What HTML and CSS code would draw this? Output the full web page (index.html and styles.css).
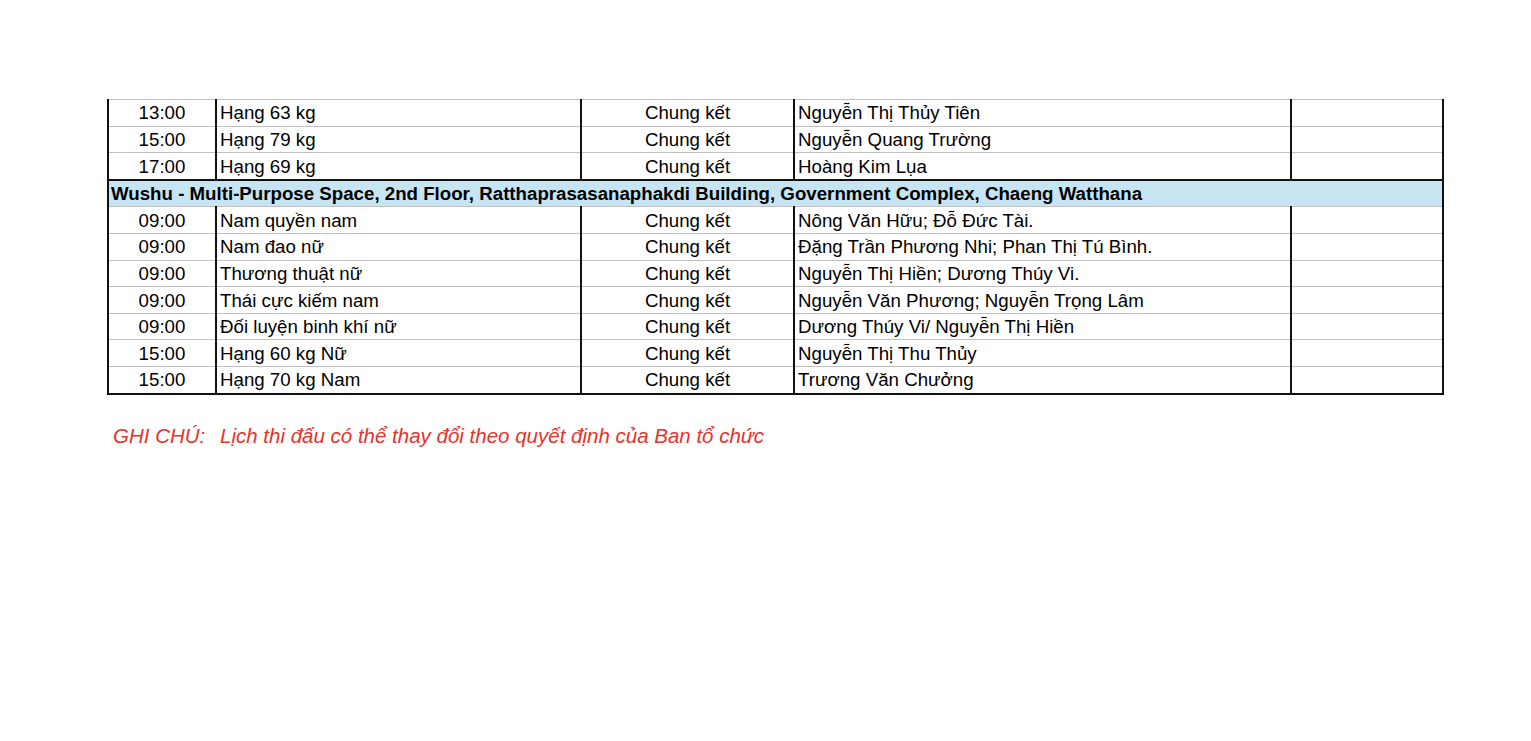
FILE: index.html
```html
<!DOCTYPE html>
<html lang="vi">
<head>
<meta charset="utf-8">
<title>Lịch thi đấu</title>
<link rel="stylesheet" href="styles.css">
</head>
<body>
<div class="page">
  <table class="schedule">
    <colgroup>
      <col class="c-time"><col class="c-event"><col class="c-round"><col class="c-athlete"><col class="c-note">
    </colgroup>
    <tbody>
      <tr class="first"><td class="time">13:00</td><td>Hạng 63 kg</td><td class="round">Chung kết</td><td>Nguyễn Thị Thủy Tiên</td><td></td></tr>
      <tr><td class="time">15:00</td><td>Hạng 79 kg</td><td class="round">Chung kết</td><td>Nguyễn Quang Trường</td><td></td></tr>
      <tr><td class="time">17:00</td><td>Hạng 69 kg</td><td class="round">Chung kết</td><td>Hoàng Kim Lụa</td><td></td></tr>
      <tr class="venue"><td colspan="5">Wushu - Multi-Purpose Space, 2nd Floor, Ratthaprasasanaphakdi Building, Government Complex, Chaeng Watthana</td></tr>
      <tr><td class="time">09:00</td><td>Nam quyền nam</td><td class="round">Chung kết</td><td>Nông Văn Hữu; Đỗ Đức Tài.</td><td></td></tr>
      <tr><td class="time">09:00</td><td>Nam đao nữ</td><td class="round">Chung kết</td><td>Đặng Trần Phương Nhi; Phan Thị Tú Bình.</td><td></td></tr>
      <tr><td class="time">09:00</td><td>Thương thuật nữ</td><td class="round">Chung kết</td><td>Nguyễn Thị Hiền; Dương Thúy Vi.</td><td></td></tr>
      <tr><td class="time">09:00</td><td>Thái cực kiếm nam</td><td class="round">Chung kết</td><td>Nguyễn Văn Phương; Nguyễn Trọng Lâm</td><td></td></tr>
      <tr><td class="time">09:00</td><td>Đối luyện binh khí nữ</td><td class="round">Chung kết</td><td>Dương Thúy Vi/ Nguyễn Thị Hiền</td><td></td></tr>
      <tr><td class="time">15:00</td><td>Hạng 60 kg Nữ</td><td class="round">Chung kết</td><td>Nguyễn Thị Thu Thủy</td><td></td></tr>
      <tr class="last"><td class="time">15:00</td><td>Hạng 70 kg Nam</td><td class="round">Chung kết</td><td>Trương Văn Chưởng</td><td></td></tr>
    </tbody>
  </table>
  <p class="note"><span class="note-label">GHI CHÚ:</span><span class="note-text">Lịch thi đấu có thể thay đổi theo quyết định của Ban tổ chức</span></p>
</div>
</body>
</html>
```

FILE: styles.css
```css
html, body {
  margin: 0;
  padding: 0;
  background: #ffffff;
}

.page {
  padding: 99px 0 0 107px;
  font-family: "Liberation Sans", Arial, sans-serif;
  color: #000;
}

.schedule {
  border-collapse: collapse;
  table-layout: fixed;
  width: 1335px;
  font-size: 18.7px;
}

.c-time { width: 108px; }
.c-event { width: 365px; }
.c-round { width: 213px; }
.c-athlete { width: 497px; }
.c-note { width: 152px; }

.schedule td {
  height: 23.6px;
  padding: 2px 0 0 3px;
  border-left: 2px solid #111;
  border-right: 2px solid #111;
  border-top: 1px solid #c0c0c0;
  border-bottom: 1px solid #c0c0c0;
  white-space: nowrap;
  line-height: 1;
  vertical-align: middle;
}

.schedule td.time,
.schedule td.round {
  text-align: center;
  padding-left: 0;
}

.schedule tr.venue td {
  background: #c6e4f2;
  font-weight: bold;
  padding-left: 2px;
  border-top: 2px solid #111;
  border-bottom: 1px solid #c0c0c0;
}

.schedule tr.last td {
  border-bottom: 2px solid #111;
}

.note {
  margin: 29px 0 0 6px;
  color: #e8322b;
  font-style: italic;
  font-size: 20.5px;
  display: flex;
}

.note-label {
  width: 107px;
}
```
